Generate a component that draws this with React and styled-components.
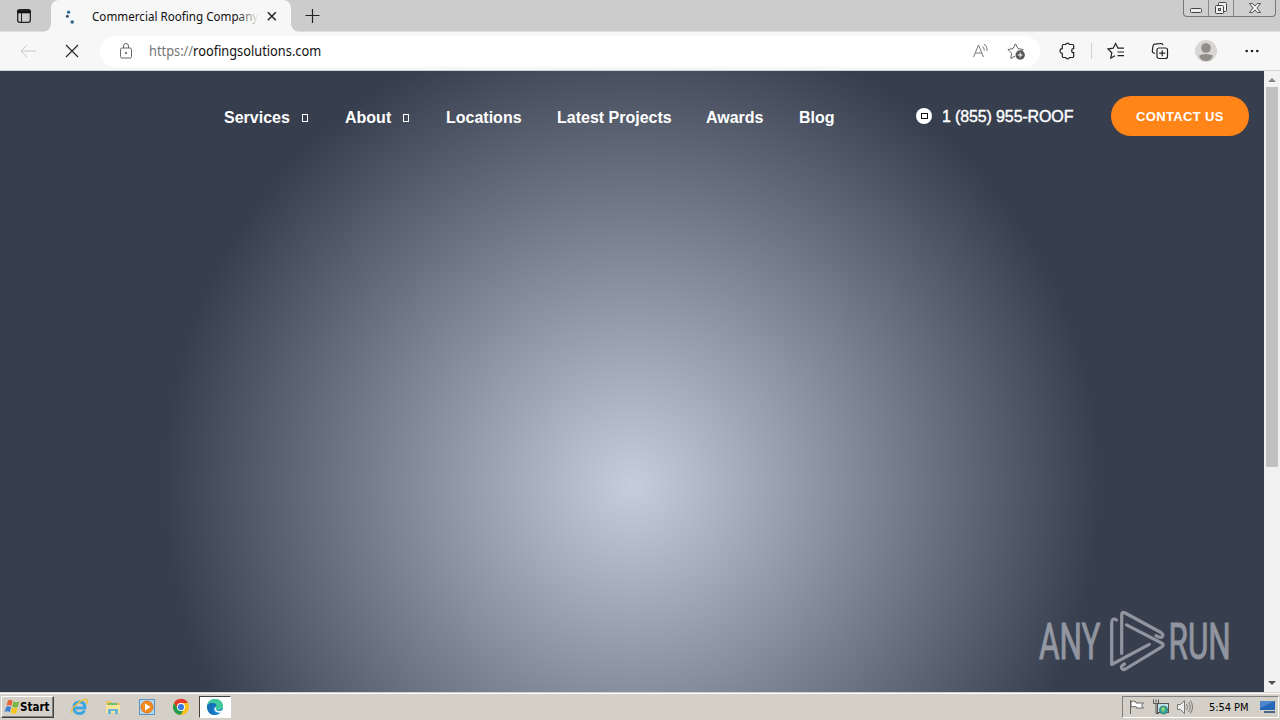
import React from "react";
import styled, { createGlobalStyle } from "styled-components";

const GlobalStyle = createGlobalStyle`
    *,
    *::before,
    *::after {
        box-sizing: border-box;
    }

    body {
        margin: 0;
        overflow: hidden;
    }
`;

const Screen = styled.div`
    width: 1280px;
    height: 720px;
    display: flex;
    flex-direction: column;
    overflow: hidden;
    font-family: "Liberation Sans", Arial, sans-serif;
`;

// Browser chrome
const TabStrip = styled.div`
    height: 32px;
    flex: none;
    display: flex;
    background: #cccccc;
    border-bottom: 1px solid #dedede;
`;

const TabActions = styled.div`
    width: 51px;
    padding: 8px 0 0 16px;
`;

const Tab = styled.div`
    position: relative;
    width: 240px;
    height: 32px;
    display: flex;
    align-items: center;
    padding: 0 13px 0 12px;
    background: #f7f7f7;
    border-radius: 8px 8px 0 0;

    &::before,
    &::after {
        content: "";
        position: absolute;
        bottom: 0;
        width: 8px;
        height: 8px;
    }

    &::before {
        left: -8px;
        background: radial-gradient(circle at 0 0, transparent 7.5px, #f7f7f7 8px);
    }

    &::after {
        right: -8px;
        background: radial-gradient(circle at 100% 0, transparent 7.5px, #f7f7f7 8px);
    }
`;

const TabTitle = styled.div`
    position: relative;
    width: 167px;
    margin: 0 7px 0 13px;
    white-space: nowrap;
    font: 12px "Noto Sans", sans-serif;
    color: #111;

    &::after {
        content: "";
        position: absolute;
        right: 0;
        top: 0;
        width: 22px;
        height: 100%;
        background: linear-gradient(90deg, rgba(247, 247, 247, 0), #f7f7f7);
    }
`;

const FittedText = styled.span`
    display: inline-block;
    transform: scaleX(${(props) => props.$scale});
    transform-origin: left;
`;

const NewTab = styled.div`
    padding: 8px 0 0 14px;
`;

const WindowButtons = styled.div`
    display: flex;
    width: 93px;
    height: 17px;
    margin: 0 4px 0 auto;
    border: 1px solid #777;
    border-top: none;
    border-radius: 0 0 4px 4px;
    background: #cfcfcf;
`;

const WindowButton = styled.div`
    width: ${(props) => props.$width}px;
    display: flex;
    justify-content: center;
    border-right: ${(props) => (props.$last ? "none" : "1px solid #888")};
`;

const Toolbar = styled.div`
    height: 39px;
    flex: none;
    display: flex;
    align-items: center;
    background: #f7f7f7;
    border-bottom: 1px solid #cfd3d8;
`;

const NavButtons = styled.div`
    display: flex;
    gap: 26px;
    width: 100px;
    padding-left: 19px;
`;

const AddressBar = styled.div`
    width: 940px;
    height: 31px;
    display: flex;
    align-items: center;
    padding: 0 13px 0 17px;
    border-radius: 16px;
    background: white;
`;

const Url = styled.div`
    margin-left: 14px;
    flex: 1;
    white-space: nowrap;
    font: 13.5px "Noto Sans", sans-serif;
    color: #111;

    span span {
        color: #767676;
    }
`;

const AddressIcons = styled.div`
    display: flex;
    gap: 17px;
`;

const ToolIcons = styled.div`
    flex: 1;
    display: flex;
    align-items: center;
    padding-left: 18px;
`;

const Divider = styled.div`
    width: 1px;
    height: 16px;
    margin: 0 14px 0 13px;
    background: #d0d0d0;
`;

const ToolIcon = styled.div`
    display: flex;
    margin-right: ${(props) => props.$gap || 0}px;
`;

// Page
const Viewport = styled.div`
    height: 621px;
    flex: none;
    display: flex;
`;

const Page = styled.div`
    position: relative;
    width: 1264px;
    background: radial-gradient(circle at 632px 414px, #c6cddd 0, #373e4d 469px);
`;

const Header = styled.header`
    display: flex;
    align-items: center;
    height: 90px;
    padding: 0 15px 0 224px;
    color: white;
`;

const Menu = styled.nav`
    display: flex;
    width: 692px;
    padding-top: 3px;
    font-size: 16px;
    font-weight: bold;
`;

const MenuItem = styled.div`
    width: ${(props) => props.$width}px;
    display: flex;
    align-items: center;
    white-space: nowrap;
`;

const Missing = styled.span`
    width: 6px;
    height: 8px;
    margin: 1px 0 0 12px;
    border: 1px solid white;
`;

const Label = styled.span`
    width: ${(props) => props.$width}px;
`;

const Phone = styled.div`
    display: flex;
    align-items: center;
    width: 195px;
    font-size: 16px;
    letter-spacing: -0.13px;
    white-space: nowrap;
    -webkit-text-stroke: 0.4px white;
`;

const PhoneNumber = styled.span`
    padding-top: 2px;
`;

const PhoneBadge = styled.span`
    width: 16px;
    height: 16px;
    margin-right: 10px;
    display: flex;
    align-items: center;
    justify-content: center;
    border-radius: 50%;
    background: white;

    &::after {
        content: "";
        width: 7px;
        height: 6px;
        border: 1px solid #111;
    }
`;

const ContactButton = styled.button`
    width: 138px;
    height: 40px;
    padding: 0;
    border: none;
    border-radius: 20px;
    background: #ff8519;
    color: white;
    font: bold 13px "Liberation Sans", Arial, sans-serif;
    letter-spacing: 0.35px;
    white-space: nowrap;
`;

const Watermark = styled.svg`
    position: absolute;
    left: 1034px;
    top: 536px;
    opacity: 0.5;
    overflow: visible;
`;

const Scrollbar = styled.div`
    width: 16px;
    display: flex;
    flex-direction: column;
    justify-content: space-between;
    background: #f1f1f1;
`;

const ScrollTop = styled.div`
    display: flex;
    flex-direction: column;
`;

const ScrollThumb = styled.div`
    width: 12px;
    height: 380px;
    margin-left: 2px;
    background: #c1c1c1;
`;

// Taskbar
const Taskbar = styled.div`
    height: 28px;
    flex: none;
    display: flex;
    align-items: center;
    padding-top: 1px;
    background: #d4d0c8;
    border-top: 1px solid #d4d0c8;
    box-shadow: inset 0 1px white;
`;

const StartButton = styled.div`
    width: 53px;
    height: 22px;
    margin-left: 1px;
    display: flex;
    align-items: center;
    padding-left: 2px;
    border: 1px solid;
    border-color: white #404040 #404040 white;
    box-shadow: inset -1px -1px #808080;
    color: black;
    font: bold 11.5px "DejaVu Sans Condensed", "DejaVu Sans", sans-serif;
`;

const Launchers = styled.div`
    display: flex;
    align-items: center;
    padding-left: 8px;
`;

const Launcher = styled.div`
    width: ${(props) => (props.$active ? 32 : 34)}px;
    height: 22px;
    display: flex;
    align-items: center;
    justify-content: center;
    margin-left: ${(props) => (props.$active ? 1 : 0)}px;
    background: ${(props) => (props.$active ? "white" : "none")};
    border: ${(props) => (props.$active ? "1px solid" : "none")};
    border-color: #404040 #fff #fff #404040;
`;

const Tray = styled.div`
    width: 157px;
    height: 22px;
    margin: 0 1px 0 auto;
    display: flex;
    align-items: center;
    padding-left: 6px;
    border: 1px solid;
    border-color: #808080 white white #808080;
`;

const TrayIcons = styled.div`
    display: flex;
    gap: 8px;
    width: 80px;
`;

const Clock = styled.div`
    width: 51px;
    white-space: nowrap;
    font: 11px "DejaVu Sans Condensed", "DejaVu Sans", sans-serif;
    letter-spacing: -0.05px;
    color: black;
`;

const Svg = styled.svg`
    display: block;
    flex: none;
`;

const Line = ({ w = 16, h = 16, color = "#222", width = 1, children }) => (
    <Svg width={w} height={h} viewBox={`0 0 ${w} ${h}`} fill="none" stroke={color} strokeWidth={width}>
        {children}
    </Svg>
);

const menu = [
    { label: "Services", width: 121, text: 66, drop: true },
    { label: "About", width: 101, text: 46, drop: true },
    { label: "Locations", width: 111, text: 76 },
    { label: "Latest Projects", width: 149, text: 114 },
    { label: "Awards", width: 93, text: 58 },
    { label: "Blog", width: 60, text: 36 },
];

const Chrome = () => (
    <>
        <TabStrip>
            <TabActions>
                <Line>
                    <rect x="1.7" y="1.7" width="12.6" height="12.6" rx="2" strokeWidth="1.3" />
                    <path d="M2.3 3h11.4v1.4H2.3z" fill="#111" stroke="#111" strokeWidth="1.8" />
                    <path d="M5.5 5v9" />
                </Line>
            </TabActions>
            <Tab>
                <Line color="none">
                    <g fill="#2f6a92">
                        <circle cx="5.6" cy="4.2" r="1.6" />
                        <circle cx="4.4" cy="8.2" r="1.5" fill="#3e5368" />
                        <circle cx="9.2" cy="14" r="1.8" />
                    </g>
                </Line>
                <TabTitle>
                    <FittedText $scale={0.97}>Commercial Roofing Company</FittedText>
                </TabTitle>
                <Line w={12} h={12} width={1.5}>
                    <path d="M1.8 2.3l8 8M9.800 2.300l-8 8" />
                </Line>
            </Tab>
            <NewTab>
                <Line width={1.2}>
                    <path d="M7.5 1v14M.5 7.5h14" />
                </Line>
            </NewTab>
            <WindowButtons>
                <WindowButton $width={25}>
                    <Line w={14} h={16} color="#444">
                        <rect x="1.5" y="8.5" width="11" height="4" rx="1" fill="#eee" />
                    </Line>
                </WindowButton>
                <WindowButton $width={25}>
                    <Line w={14} h={16} color="#444">
                        <rect x="4.5" y="2.5" width="8" height="9" rx="1" fill="#eee" />
                        <rect x="1.5" y="5.5" width="8" height="8" rx="1" fill="#eee" />
                        <rect x="4.5" y="8.5" width="2" height="2" />
                    </Line>
                </WindowButton>
                <WindowButton $width={41} $last>
                    <Line w={14} h={16} color="#555">
                        <path d="M1.5 3.5h3.2L7 6l2.3-2.5h3.2L9 8l3.5 4.5H9.3L7 10l-2.3 2.5H1.5L5 8z" fill="#eee" />
                    </Line>
                </WindowButton>
            </WindowButtons>
        </TabStrip>
        <Toolbar>
            <NavButtons>
                <Line w={18} color="#c7c7c7">
                    <path d="M17 8H2M8 2L2 8l6 6" />
                </Line>
                <Line w={18} width={1.1}>
                    <path d="M3 2l12 12M15 2L3 14" />
                </Line>
            </NavButtons>
            <AddressBar>
                <Line w={18} h={18} color="#666">
                    <rect x="3.5" y="6" width="11" height="10" rx="1.5" />
                    <path d="M6.5 6V4a2.5 2.5 0 0 1 5 0v2" />
                    <circle cx="9" cy="11" r="0.7" fill="#666" />
                </Line>
                <Url>
                    <FittedText $scale={0.948}>
                        <span>https://</span>roofingsolutions.com
                    </FittedText>
                </Url>
                <AddressIcons>
                    <Line w={18} h={18} color="#777">
                        <path d="M1.5 15L6.5 3l5 12M3.3 11h6.5M10.5 4.5q1.7 1.3 1.8 4M12 2q3.5 2.2 3.2 7" />
                    </Line>
                    <Line w={20} h={18} color="#666">
                        <path d="M8 14.2L3.8 16.5l.8-5.2L1 7.5l5-.9L8.5 1.8 11 6.6l5.2.9-1.6 1.8" />
                        <circle cx="13.2" cy="13" r="4.7" fill="#555" stroke="none" />
                        <path d="M10.7 13h5M13.2 10.5v5" stroke="white" />
                    </Line>
                </AddressIcons>
            </AddressBar>
            <ToolIcons>
                <ToolIcon>
                    <Line w={20} h={20} width={1.2}>
                        <path d="M5.5 3.5h2.2a2 2 0 0 1 3.8 0h3a1.2 1.2 0 0 1 1.2 1.2v3a2 2 0 1 0 0 4v3.6a1.2 1.2 0 0 1-1.2 1.2h-3a2 2 0 0 1-3.8 0H5.5a1.2 1.2 0 0 1-1.2-1.2v-3a2.3 2.3 0 0 1 0-4.6v-3a1.2 1.2 0 0 1 1.2-1.2z" />
                    </Line>
                </ToolIcon>
                <Divider />
                <ToolIcon $gap={24}>
                    <Line w={20} h={20} width={1.2}>
                        <path d="M9 14.7L4.8 17l1-5.3L2 8l5.2-.8L9.6 2.5 12 7.2h6M11.5 11h6.5M11.5 14.7h6.5" />
                    </Line>
                </ToolIcon>
                <ToolIcon $gap={25}>
                    <Line w={20} h={20} width={1.2}>
                        <rect x="7" y="7" width="10.5" height="10.5" rx="2" />
                        <path d="M12.2 9.2v6M9.2 12.2h6M5 12.5L3.7 12a2 2 0 0 1-1.4-2.3L3 5a2 2 0 0 1 1.8-1.8L11 2.5A2 2 0 0 1 13 4.3" />
                    </Line>
                </ToolIcon>
                <ToolIcon $gap={27}>
                    <Line w={22} h={22} color="none">
                        <circle cx="11" cy="11" r="11" fill="#d8d6d4" />
                        <circle cx="11" cy="8" r="4.8" fill="#918d89" />
                        <path d="M4 15.5q7-3.2 14 0-1.5 5.5-7 5.5t-7-5.5z" fill="#918d89" />
                    </Line>
                </ToolIcon>
                <ToolIcon>
                    <Line w={16} color="none">
                        <g fill="#222">
                            <circle cx="2.7" cy="8" r="1.3" />
                            <circle cx="8" cy="8" r="1.3" />
                            <circle cx="13.3" cy="8" r="1.3" />
                        </g>
                    </Line>
                </ToolIcon>
            </ToolIcons>
        </Toolbar>
    </>
);

const App = () => {
    return (
        <Screen>
            <GlobalStyle />
            <Chrome />
            <Viewport>
                <Page>
                    <Header>
                        <Menu>
                            {menu.map((item) => (
                                <MenuItem key={item.label} $width={item.width}>
                                    <Label $width={item.text}>{item.label}</Label>
                                    {item.drop && <Missing />}
                                </MenuItem>
                            ))}
                        </Menu>
                        <Phone>
                            <PhoneBadge />
                            <PhoneNumber>1 (855) 955-ROOF</PhoneNumber>
                        </Phone>
                        <ContactButton>CONTACT US</ContactButton>
                    </Header>
                    <Watermark width="215" height="70" viewBox="0 0 215 70">
                        <g fill="#e8ebf2" stroke="#e8ebf2" strokeWidth="0.9" fontFamily="Roboto, sans-serif" fontSize="50">
                            <text transform="translate(5 52.3) scale(0.63 1)">ANY</text>
                            <text transform="translate(134.5 52.3) scale(0.63 1)">RUN</text>
                        </g>
                        <g fill="none" stroke="#e8ebf2" strokeWidth="3.2" strokeLinejoin="round" strokeLinecap="round">
                            <path d="M82.5 13q-4.8-3-4.8 3v41.5l37.6-20.2" />
                            <path d="M87.7 46.5V8q0-4 3.5-2L127 25.5q3 2 1.2 4.2-1.7 1.8-6.2-1" />
                            <path d="M92.5 17.8L127.5 36q3.5 2 0 4.2L91.5 62q-3 1.5-4-1-.6-2 3-4" />
                        </g>
                    </Watermark>
                </Page>
                <Scrollbar>
                    <ScrollTop>
                        <Line color="none">
                            <path d="M4 11l4-4 4 4z" fill="#888" />
                        </Line>
                        <ScrollThumb />
                    </ScrollTop>
                    <Line color="none">
                        <path d="M4 5l4 4 4-4z" fill="#505050" />
                    </Line>
                </Scrollbar>
            </Viewport>
            <Taskbar>
                <StartButton>
                    <Line w={16} color="none">
                        <path d="M4 1.5q2.3-1.5 4.5.3L7.4 7Q5 5.3 2.5 6.8z" fill="#e8623a" />
                        <path d="M9.3 2.3q3 1.7 6.2 0L14 7.7q-3 1.8-5.8-.2z" fill="#79b943" />
                        <path d="M2.2 7.8q2.4-1.4 4.9.2L5.8 13Q3.3 11.4.7 13z" fill="#3b82d0" />
                        <path d="M8 8.3q2.9 1.9 5.8.2L12.4 14q-3 1.7-5.8-.5z" fill="#f7c51e" />
                    </Line>
                    Start
                </StartButton>
                <Launchers>
                    <Launcher>
                        <Line w={18} h={18} color="#3da5df" width={2.8}>
                            <path d="M4 10h11q0-6-5.5-6T4 10q0 5.5 5.5 5.5 3.5 0 5-3" />
                            <path d="M2 15Q0 12 7 6t10-4q1 2-1 4" stroke="#edbb38" strokeWidth="1.3" />
                        </Line>
                    </Launcher>
                    <Launcher>
                        <Line w={18} h={18} color="none">
                            <path d="M2 3h5l1 2h8v10H2z" fill="#e8c565" />
                            <path d="M4 5h9v3H4z" fill="#6ebc69" />
                            <path d="M2 7h14v8H2z" fill="#f7e49d" />
                            <path d="M4 16v-5h10v5h-3v-3H7v3z" fill="#66b5dc" />
                        </Line>
                    </Launcher>
                    <Launcher>
                        <Line w={18} h={18} color="#5794c9">
                            <rect x="1.5" y="1.5" width="15" height="15" fill="#b8daf1" />
                            <circle cx="9" cy="9" r="6" fill="#f58a1f" stroke="#df751a" />
                            <path d="M7 5.5v7L12.5 9z" fill="white" stroke="none" />
                        </Line>
                    </Launcher>
                    <Launcher>
                        <Line w={18} h={18} color="none">
                            <circle cx="9" cy="9" r="8" fill="#fbc116" />
                            <path d="M2 5a8 8 0 0 1 14 0H9a4 4 0 0 0-3.5 6z" fill="#e33b2e" />
                            <path d="M2 5l4 6q1.5 2.5 5 2l-2.5 4A8 8 0 0 1 2 5z" fill="#249b4b" />
                            <circle cx="9" cy="9" r="4" fill="white" />
                            <circle cx="9" cy="9" r="3.1" fill="#3978e6" />
                        </Line>
                    </Launcher>
                    <Launcher $active>
                        <Line w={18} h={18} color="none">
                            <circle cx="9" cy="9" r="8" fill="#1687cf" />
                            <path d="M1 8Q2 1 9 1t8 7q0 4-5 4-3 0-2-2 1-5-4-5Q3 5 1 8z" fill="#42c99a" />
                            <path d="M1 8q2-3.5 6-3 3 0 3.5 3-4 0-3.8 4 .3 3.5 4.3 5Q1 18 1 8z" fill="#1670b9" />
                            <path d="M10 9q-1 4 3 4 2 0 4-1-.5 1.5-1.5 2.4-4.5 1-6.5-1.4Q7.5 9.5 10 9z" fill="white" />
                        </Line>
                    </Launcher>
                </Launchers>
                <Tray>
                    <TrayIcons>
                        <Line color="#666">
                            <path d="M1.5 1v14M2 2.5q3-1 5 .5v1h7.5l-2 2.5 2 2.5H7.500V8q-2.5-1-5.5 0z" fill="white" />
                        </Line>
                        <Line color="#555">
                            <rect x="4.5" y="4.5" width="11" height="9" fill="#bde0e5" />
                            <path d="M.5.5v4h5v-4M3 .5v3M3 4.5v10h3" />
                            <circle cx="10.5" cy="11" r="4" fill="#34a99a" stroke="#397a82" />
                            <path d="M8 9l3-1 1 3-2 2z" fill="#96d56d" stroke="none" />
                        </Line>
                        <Line color="#777">
                            <path d="M.5 5.5h3l4-4v13l-4-4h-3z" fill="#eee" />
                            <path d="M9.500 5q2 3 0 6M11.5 3q3.5 5 0 10M13.5 1.5q4 6.5 0 13" />
                        </Line>
                    </TrayIcons>
                    <Clock>5:54 PM</Clock>
                    <Line color="none">
                        <path d="M0 2h15v9H0z" fill="#2466b8" />
                        <path d="M0 2h15L0 9z" fill="#4c86cd" />
                        <path d="M4 12h11v2H4z" fill="#4b6585" />
                    </Line>
                </Tray>
            </Taskbar>
        </Screen>
    );
};

export default App;
